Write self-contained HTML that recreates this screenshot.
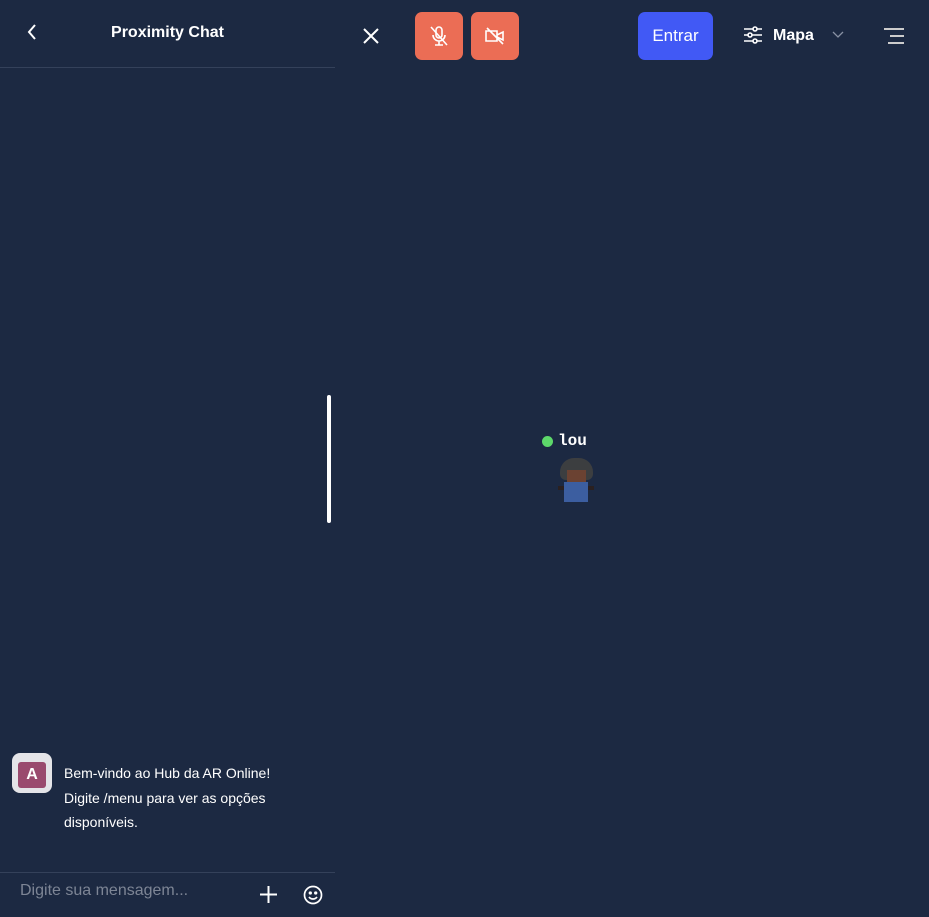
<!DOCTYPE html>
<html><head><meta charset="utf-8"><style>
*{margin:0;padding:0;box-sizing:border-box}
body{width:929px;height:917px;background:#1c2942;font-family:"Liberation Sans",sans-serif;color:#fff;position:relative;overflow:hidden}
.a{position:absolute}
</style></head><body>
<div class="a" style="left:0;top:67px;width:335px;height:1px;background:#34415a"></div>
<svg class="a" style="left:24px;top:22px" width="16" height="20" viewBox="0 0 16 20"><path d="M11 3L5 10l6 7" fill="none" stroke="#fff" stroke-width="2"/></svg>
<div class="a" style="left:0;width:335px;top:24px;text-align:center;font-weight:bold;font-size:16px">Proximity Chat</div>
<svg class="a" style="left:362px;top:27px" width="18" height="18" viewBox="0 0 18 18"><path d="M2 2L16 16M16 2L2 16" stroke="#fff" stroke-width="2"/></svg>
<div class="a" style="left:415px;top:12px;width:48px;height:48px;background:#eb6d55;border-radius:7px"></div>
<svg class="a" style="left:427px;top:24px" width="24" height="24" viewBox="0 0 24 24" fill="none" stroke="#fff" stroke-width="1.6"><rect x="9" y="3" width="6" height="11" rx="3"/><path d="M6 11a6 6 0 0 0 12 0M12 17v4M8 21h8M4 3l16 18"/></svg>
<div class="a" style="left:471px;top:12px;width:48px;height:48px;background:#eb6d55;border-radius:7px"></div>
<svg class="a" style="left:483px;top:24px" width="24" height="24" viewBox="0 0 24 24" fill="none" stroke="#fff" stroke-width="1.6"><path d="M3 7h11v10H3zM14 11l6-3v8l-6-3M4 4l16 16"/></svg>
<div class="a" style="left:638px;top:12px;width:75px;height:48px;background:#4159f5;border-radius:7px;font-size:17px;line-height:48px;text-align:center">Entrar</div>
<svg class="a" style="left:743px;top:25px" width="20" height="20" viewBox="0 0 20 20" fill="none" stroke="#fff" stroke-width="1.6"><path d="M1 4h18M1 10h18M1 16h18"/><circle cx="12" cy="4" r="2" fill="#1c2942"/><circle cx="7" cy="10" r="2" fill="#1c2942"/><circle cx="12" cy="16" r="2" fill="#1c2942"/></svg>
<div class="a" style="left:773px;top:27px;font-weight:bold;font-size:16px">Mapa</div>
<svg class="a" style="left:832px;top:31px" width="12" height="8" viewBox="0 0 12 8"><path d="M1 1l5 5 5-5" fill="none" stroke="#8891a3" stroke-width="1.3"/></svg>
<svg class="a" style="left:884px;top:27px" width="20" height="18" viewBox="0 0 20 18"><path d="M0 2h20M6 9h14M4 16h16" stroke="#ccc" stroke-width="2"/></svg>
<div class="a" style="left:327px;top:395px;width:4px;height:128px;background:#fff;border-radius:2px"></div>
<div class="a" style="left:542px;top:436px;width:11px;height:11px;border-radius:50%;background:#5dd86a"></div>
<div class="a" style="left:558px;top:432px;font-family:'Liberation Mono',monospace;font-weight:bold;font-size:16px">lou</div>
<div class="a" style="left:560px;top:458px;width:33px;height:22px;border-radius:14px 14px 6px 6px;background:#3c3e40"></div>
<div class="a" style="left:567px;top:470px;width:19px;height:13px;background:#6b4232"></div>
<div class="a" style="left:558px;top:486px;width:36px;height:4px;background:#2a2020"></div>
<div class="a" style="left:564px;top:482px;width:24px;height:20px;background:#3c5ea0"></div>
<div class="a" style="left:12px;top:753px;width:40px;height:40px;background:#e4e4e8;border-radius:8px"></div>
<div class="a" style="left:18px;top:762px;width:28px;height:26px;background:#9a4a6e;border-radius:3px;font-weight:bold;font-size:16px;text-align:center;line-height:26px">A</div>
<div class="a" style="left:64px;top:761px;font-size:14px;line-height:24.5px">Bem-vindo ao Hub da AR Online!<br>Digite /menu para ver as opções<br>disponíveis.</div>
<div class="a" style="left:0;top:872px;width:335px;height:1px;background:#34415a"></div>
<div class="a" style="left:20px;top:882px;font-size:16px;color:#7d8595">Digite sua mensagem...</div>
<svg class="a" style="left:259px;top:885px" width="19" height="19" viewBox="0 0 19 19"><path d="M9.5 1v17M1 9.5h17" stroke="#fff" stroke-width="2"/></svg>
<svg class="a" style="left:303px;top:885px" width="20" height="20" viewBox="0 0 20 20" fill="none" stroke="#fff" stroke-width="1.7"><circle cx="10" cy="10" r="8.5"/><path d="M6 12a5 5 0 0 0 8 0"/><circle cx="7.3" cy="8" r=".8" fill="#fff"/><circle cx="12.7" cy="8" r=".8" fill="#fff"/></svg>
</body></html>
